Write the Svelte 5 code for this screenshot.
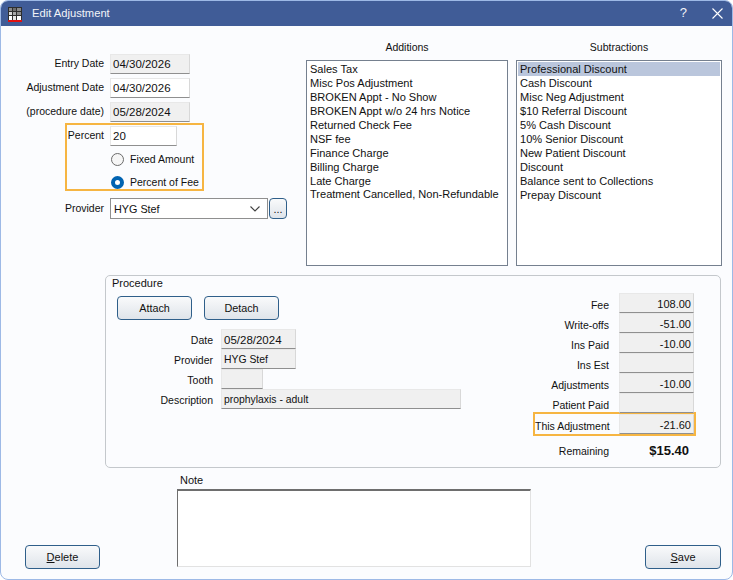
<script>
  const additions = [
    'Sales Tax',
    'Misc Pos Adjustment',
    'BROKEN Appt - No Show',
    'BROKEN Appt w/o 24 hrs Notice',
    'Returned Check Fee',
    'NSF fee',
    'Finance Charge',
    'Billing Charge',
    'Late Charge',
    'Treatment Cancelled, Non-Refundable'
  ];
  const subtractions = [
    'Professional Discount',
    'Cash Discount',
    'Misc Neg Adjustment',
    '$10 Referral Discount',
    '5% Cash Discount',
    '10% Senior Discount',
    'New Patient Discount',
    'Discount',
    'Balance sent to Collections',
    'Prepay Discount'
  ];
  const totals = [
    ['Fee', '108.00'],
    ['Write-offs', '-51.00'],
    ['Ins Paid', '-10.00'],
    ['Ins Est', ''],
    ['Adjustments', '-10.00'],
    ['Patient Paid', '']
  ];
</script>

<div class="window">
  <header class="titlebar">
    <svg class="app-icon" width="14" height="15" viewBox="0 0 14 15">
      <rect width="14" height="14" fill="#2e2e2e" />
      <rect x="1" y="1" width="3" height="3" fill="#8a8a8a" />
      <rect x="5" y="1" width="3" height="3" fill="#6e6e6e" />
      <rect x="9" y="1" width="4" height="3" fill="#8a8a8a" />
      <rect x="1" y="5" width="3" height="3" fill="#d8d8d8" />
      <rect x="5" y="5" width="3" height="3" fill="#a8a8a8" />
      <rect x="9" y="5" width="4" height="3" fill="#8a8a8a" />
      <rect x="1" y="9" width="3" height="4" fill="#fff" />
      <rect x="5" y="9" width="3" height="4" fill="#e6e6e6" />
      <rect x="9" y="9" width="4" height="4" fill="#fff" />
      <rect y="13" width="14" height="2" fill="#e01010" />
    </svg>
    <span class="title">Edit Adjustment</span>
    <span class="help">?</span>
    <svg class="close" width="11" height="11" viewBox="0 0 11 11">
      <path d="M.5.5l10 10M10.5.5l-10 10" stroke="#fff" stroke-width="1.1" fill="none" />
    </svg>
  </header>

  <div class="content">
    <section class="top">
      <div class="left">
        <div class="row">
          <span class="lbl">Entry Date</span>
          <div class="field ro date">04/30/2026</div>
        </div>
        <div class="row">
          <span class="lbl">Adjustment Date</span>
          <div class="field date">04/30/2026</div>
        </div>
        <div class="row">
          <span class="lbl">(procedure date)</span>
          <div class="field ro date">05/28/2024</div>
        </div>
        <div class="highlight percent-box">
          <div class="percent-row">
            <span class="lbl percent-lbl">Percent</span>
            <div class="field percent">20</div>
          </div>
          <div class="radio-row">
            <span class="radio"></span>
            <span>Fixed Amount</span>
          </div>
          <div class="radio-row on">
            <span class="radio"></span>
            <span>Percent of Fee</span>
          </div>
        </div>
        <div class="row provider-row">
          <span class="lbl">Provider</span>
          <div class="select">
            <span>HYG Stef</span>
            <svg width="10" height="6" viewBox="0 0 10 6">
              <path d="M.5.5L5 5 9.5.5" stroke="#444" stroke-width="1.1" fill="none" />
            </svg>
          </div>
          <button class="btn dots" type="button">...</button>
        </div>
      </div>

      <div class="list-col add-col">
        <div class="list-title">Additions</div>
        <div class="listbox">
          {#each additions as item, i}
            <div class="item" class:tight={i === 9}>{item}</div>
          {/each}
        </div>
      </div>

      <div class="list-col sub-col">
        <div class="list-title">Subtractions</div>
        <div class="listbox">
          {#each subtractions as item, i}
            <div class="item" class:selected={i === 0}>{item}</div>
          {/each}
        </div>
      </div>
    </section>

    <section class="group">
      <div class="group-title">Procedure</div>
      <div class="group-body">
        <div class="proc">
          <div class="proc-buttons">
            <button class="btn" type="button">Attach</button>
            <button class="btn" type="button">Detach</button>
          </div>
          <div class="proc-rows">
            <div class="prow"><span class="plbl">Date</span><div class="field ro pdate">05/28/2024</div></div>
            <div class="prow"><span class="plbl">Provider</span><div class="field ro pdate txt">HYG Stef</div></div>
            <div class="prow"><span class="plbl">Tooth</span><div class="field ro ptooth"></div></div>
            <div class="prow"><span class="plbl">Description</span><div class="field ro pdesc txt">prophylaxis - adult</div></div>
          </div>
        </div>
        <div class="totals">
          {#each totals as [label, value]}
            <div class="trow">
              <span class="tlbl">{label}</span>
              <div class="field ro amount">{value}</div>
            </div>
          {/each}
          <div class="highlight this-adj">
            <span class="tlbl">This Adjustment</span>
            <div class="field ro amount">-21.60</div>
          </div>
          <div class="remaining">
            <span class="tlbl">Remaining</span>
            <strong>$15.40</strong>
          </div>
        </div>
      </div>
    </section>

    <section class="bottom">
      <button class="btn foot" type="button"><u>D</u>elete</button>
      <div class="note">
        <div class="note-lbl">Note</div>
        <div class="note-box"></div>
      </div>
      <button class="btn foot save" type="button"><u>S</u>ave</button>
    </section>
  </div>
</div>

<style>
  :global(body) {
    margin: 0;
    background: #fff;
  }

  .window {
    box-sizing: border-box;
    width: 733px;
    height: 580px;
    display: flex;
    flex-direction: column;
    overflow: hidden;
    border: 1px solid #9db9e6;
    border-radius: 8px;
    background: #fbfcfe;
    color: #111;
    font-family: 'Liberation Sans', Arial, sans-serif;
    font-size: 11px;
    line-height: 14px;
  }

  .titlebar {
    flex: none;
    height: 25px;
    display: flex;
    align-items: center;
    padding: 0 9px 0 7px;
    background: #405c97;
    color: #f2f4f8;
  }

  .app-icon {
    margin-top: 2px;
  }

  .title {
    margin: -1px 0 0 10px;
    flex: 1;
    font-size: 11.2px;
  }

  .help {
    margin: -1px 25px 0 0;
    font-size: 13px;
  }

  .content {
    flex: 1;
    display: flex;
    flex-direction: column;
    min-height: 0;
  }

  .top {
    display: flex;
    height: 249px;
    flex: none;
  }

  .left {
    width: 305px;
    flex: none;
    padding-top: 28px;
    box-sizing: border-box;
    font-size: 10.5px;
  }

  .row {
    display: flex;
    align-items: center;
    height: 20px;
    margin-bottom: 4px;
  }

  .lbl {
    width: 103px;
    flex: none;
    margin: -2px 6px 0 0;
    text-align: right;
    white-space: nowrap;
  }

  .field {
    box-sizing: border-box;
    height: 20px;
    padding: 3px 2px;
    background: #fff;
    border: 1px solid #e8e8e8;
    border-bottom: 1px solid #8f8f8f;
    border-right-color: #d8d8d8;
    white-space: nowrap;
    font-size: 11.5px;
  }

  .field.ro {
    background: #f0f0f0;
  }

  .field.txt {
    font-size: 10.4px;
  }

  .date {
    width: 80px;
    padding-top: 2px;
  }

  .highlight {
    box-sizing: border-box;
    border: 2px solid #f6b542;
  }

  .percent-box {
    width: 139px;
    height: 68px;
    margin-left: 64px;
    margin-top: -3px;
  }

  .percent-row {
    display: flex;
    align-items: center;
    height: 20px;
    margin: 1px 0 6px;
  }

  .percent-lbl {
    width: 37px;
  }

  .percent {
    width: 67px;
    padding-top: 2px;
  }

  .radio-row {
    display: flex;
    align-items: center;
    height: 14px;
    margin-left: 44px;
    gap: 6px;
    white-space: nowrap;
  }

  .radio-row.on {
    margin-top: 9px;
  }

  .radio {
    box-sizing: border-box;
    flex: none;
    width: 13px;
    height: 13px;
    border: 1px solid #6b6b6b;
    border-radius: 50%;
    background: #f6f6f6;
  }

  .on .radio {
    border: 4px solid #0063b1;
    background: #fff;
  }

  .provider-row {
    height: 21px;
    margin-top: 7px;
  }

  .select {
    box-sizing: border-box;
    width: 158px;
    height: 21px;
    display: flex;
    align-items: center;
    justify-content: space-between;
    padding: 0 7px 0 3px;
    background: #fff;
    border: 1px solid #8f8f8f;
    font-size: 10.8px;
  }

  .btn {
    box-sizing: border-box;
    width: 75px;
    height: 24px;
    padding: 0;
    border: 1px solid #2f5f8a;
    border-radius: 4px;
    background: linear-gradient(#f9fafb, #dfe4ea);
    color: #111;
    font: inherit;
    font-size: 10.8px;
  }

  .dots {
    width: 18px;
    height: 21px;
    margin-left: 1px;
  }

  .list-col {
    flex: none;
    padding-top: 14px;
  }

  .add-col {
    width: 202px;
    margin-right: 8px;
  }

  .sub-col {
    width: 206px;
  }

  .list-title {
    text-align: center;
    height: 20px;
    font-size: 10.5px;
  }

  .listbox {
    box-sizing: border-box;
    height: 206px;
    padding: 1px;
    background: #fff;
    border: 1px solid #75808f;
  }

  .item {
    height: 14px;
    padding-left: 2px;
    white-space: nowrap;
    font-size: 11.05px;
  }

  .item.tight {
    margin-top: -1px;
  }

  .item.selected {
    background: #bac6dc;
  }

  .group {
    flex: none;
    box-sizing: border-box;
    width: 616px;
    height: 193px;
    margin-left: 104px;
    border: 1px solid #c4c8cc;
    border-radius: 5px;
  }

  .group-title {
    padding-left: 6px;
    height: 14px;
  }

  .group-body {
    display: flex;
    font-size: 10.5px;
  }

  .proc {
    width: 414px;
    flex: none;
  }

  .proc-buttons {
    display: flex;
    gap: 12px;
    padding: 6px 0 0 11px;
  }

  .proc-rows {
    margin-top: 9px;
  }

  .prow {
    display: flex;
    align-items: center;
    height: 20px;
  }

  .plbl {
    width: 107px;
    flex: none;
    margin-right: 8px;
    padding-top: 1px;
    text-align: right;
  }

  .pdate {
    width: 75px;
  }

  .ptooth {
    width: 42px;
  }

  .pdesc {
    width: 240px;
  }

  .totals {
    flex: 1;
    margin-top: 3px;
  }

  .trow {
    display: flex;
    align-items: center;
    height: 20px;
  }

  .tlbl {
    width: 89px;
    flex: none;
    margin-right: 10px;
    padding-top: 3px;
    text-align: right;
    white-space: nowrap;
  }

  .amount {
    width: 75px;
    text-align: right;
    padding-top: 3px;
    font-size: 11px;
  }

  .this-adj {
    display: flex;
    align-items: center;
    width: 163px;
    height: 24px;
    margin: -1px 0 0 13px;
  }

  .this-adj .tlbl {
    width: 74px;
  }

  .remaining {
    display: flex;
    align-items: center;
    height: 20px;
    margin-top: 5px;
  }

  .remaining .tlbl {
    padding-top: 0;
  }

  .remaining strong {
    width: 70px;
    font-size: 13px;
    text-align: right;
  }

  .bottom {
    flex: 1;
    display: flex;
    align-items: flex-end;
    padding: 0 11px 10px 24px;
  }

  .foot {
    flex: none;
    font-size: 11px;
  }

  .save {
    width: 76px;
  }

  .note {
    width: 354px;
    margin: 0 114px 2px 77px;
  }

  .note-lbl {
    padding-left: 3px;
    height: 16px;
  }

  .note-box {
    box-sizing: border-box;
    height: 78px;
    background: #fff;
    border: 1px solid #e2e2e2;
    border-top: 2px solid #6e6e6e;
    border-left: 1px solid #6e6e6e;
  }
</style>
